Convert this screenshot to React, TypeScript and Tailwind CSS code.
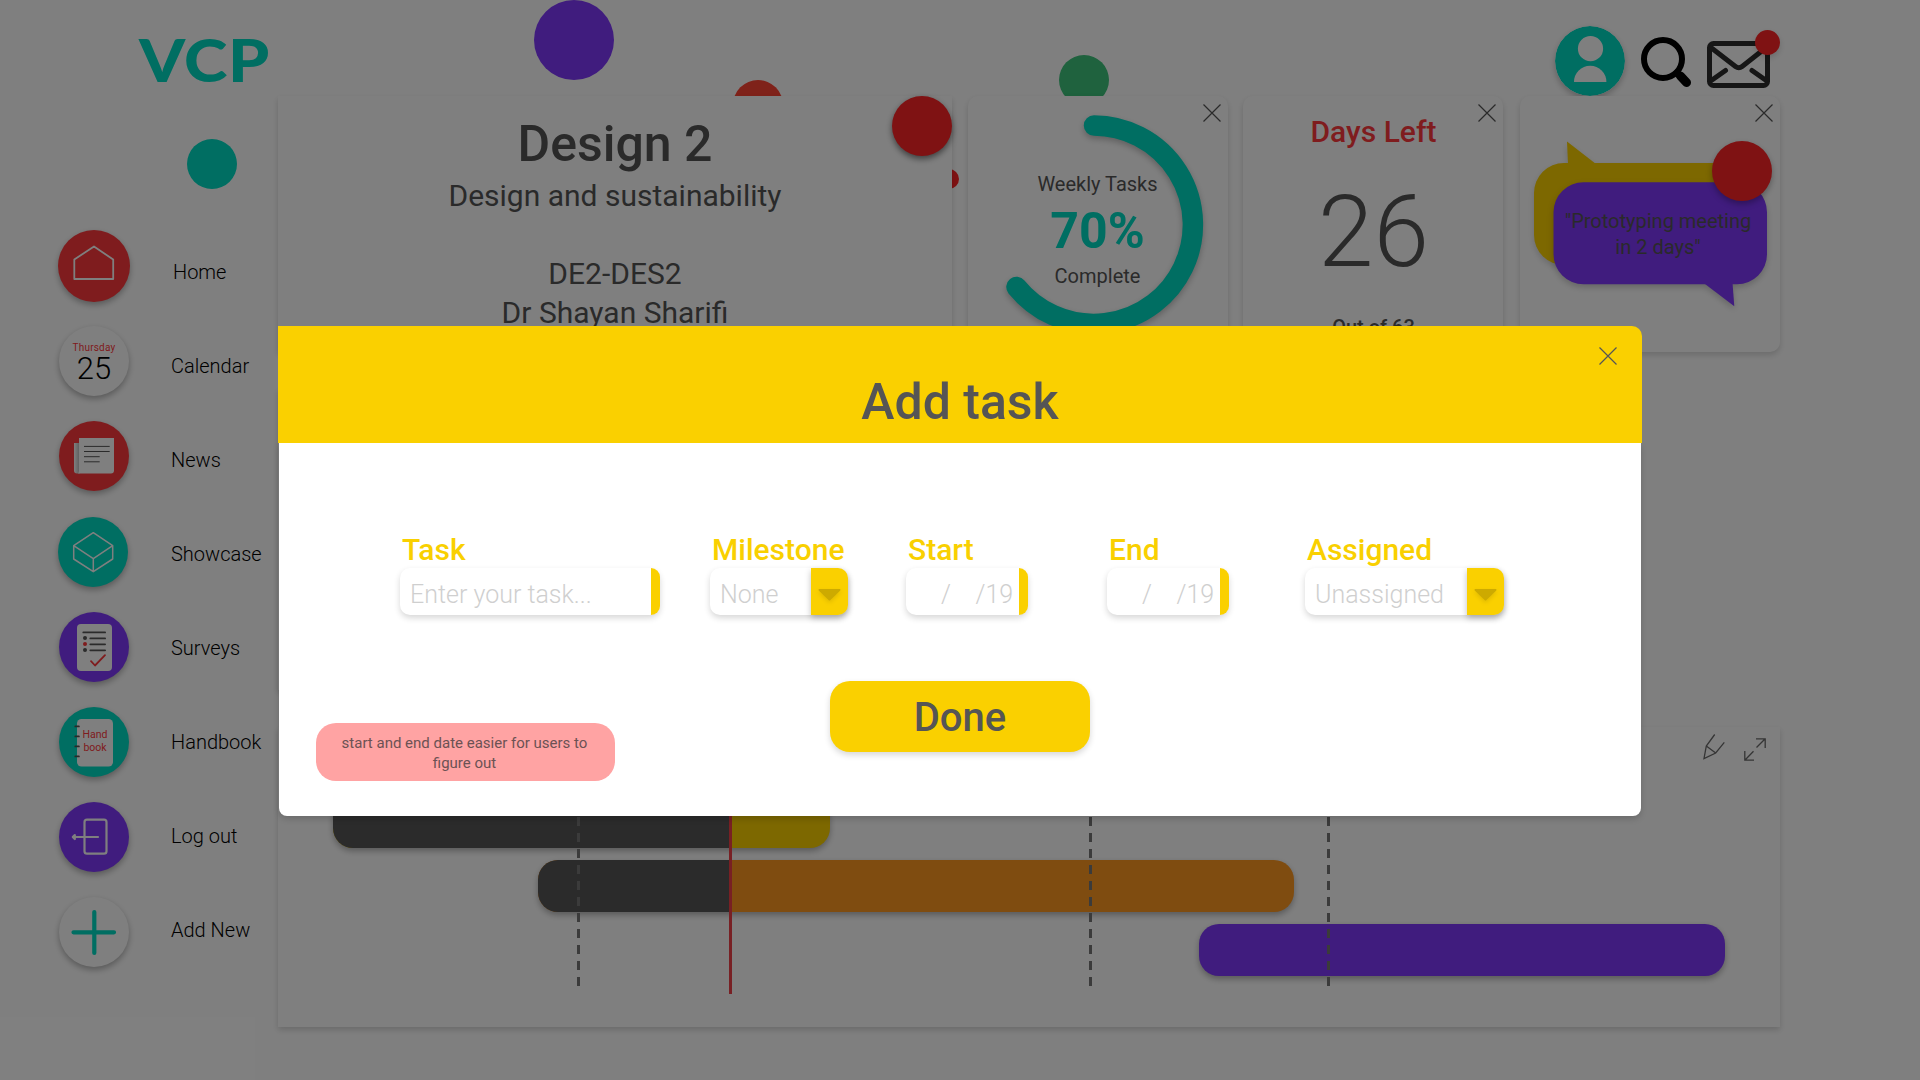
import React from "react";

const cardShadow = "shadow-[0_3px_6px_rgba(0,0,0,0.16)]";

function CloseIcon({ className = "" }: { className?: string }) {
  return (
    <svg className={className} width="18" height="18" viewBox="0 0 18 18" fill="none" stroke="#555555" strokeWidth="1.2">
      <path d="M.5 .5 17.5 17.5M17.5 .5.5 17.5" />
    </svg>
  );
}

function Dot({ className }: { className: string }) {
  return <div className={"absolute rounded-full " + className} />;
}

function Header() {
  return (
    <header className="relative flex h-24 items-start justify-between pl-[139px] pr-[140px]">
      <div className="origin-left scale-x-[1.115] pt-[25px] font-['Lato'] text-[59px] leading-[70px] font-black tracking-[0.5px] text-[#00dcc4]">
        VCP
      </div>
      <div className="flex gap-4">
        <svg className="mt-[26px] rounded-full shadow-[0_3px_6px_rgba(0,0,0,0.25)]" width="70" height="70" viewBox="0 0 70 70">
          <circle cx="35" cy="35" r="35" fill="#00dcc4" />
          <circle cx="35.5" cy="22.7" r="12.6" fill="#fff" />
          <path d="M19 56a16.2 16.2 0 0 1 32.4 0z" fill="#fff" />
        </svg>
        <svg className="mt-[37px]" width="50" height="50" viewBox="0 0 50 50" fill="none" stroke="#000" strokeLinecap="round">
          <circle cx="22" cy="22" r="19" strokeWidth="6" />
          <path d="M36 36l3 3" strokeWidth="7" />
          <path d="M39.500 39l6 6.500" strokeWidth="9" />
        </svg>
        <div className="relative mt-[30px] h-[58px] w-[73px]">
          <svg width="73" height="60" viewBox="0 0 73 60" fill="none" stroke="#2c2c2c" strokeWidth="5" strokeLinecap="round" strokeLinejoin="round">
            <rect x="2.500" y="13.500" width="58" height="42" rx="4" />
            <path d="M4.500 18 28.500 36.500q3.300 2.500 6.600 0L58.500 18" />
            <path d="M18.500 40.500 5 50M45 40.500 58.500 50" />
          </svg>
          <Dot className="top-0 right-0 size-[25px] bg-[#ff2426] shadow-[0_3px_6px_rgba(0,0,0,0.16)]" />
        </div>
      </div>
    </header>
  );
}

function NavCircle({ className, children }: { className: string; children: React.ReactNode }) {
  return (
    <div className={"relative shrink-0 rounded-full shadow-[0_3px_6px_rgba(0,0,0,0.3)] " + className}>{children}</div>
  );
}

function Sidebar() {
  const labels = ["Home", "Calendar", "News", "Showcase", "Surveys", "Handbook", "Log out", "Add New"];
  return (
    <nav className="flex w-[278px] shrink-0 pl-[58px]">
      <div className="flex w-[72px] flex-col items-center gap-[25px] pt-[134px]">
        <NavCircle className="-mb-px size-[72px] bg-[#ff383c]">
          <svg width="72" height="72" viewBox="0 0 72 72" fill="none" stroke="#fff" strokeWidth="1.8" strokeLinejoin="round">
            <path d="M36 16.500 55.200 29.500V49H16.300V29.500z" />
          </svg>
        </NavCircle>
        <NavCircle className="flex size-[70px] flex-col items-center bg-white pt-[15px]">
          <span className="text-[10px] leading-[14px] tracking-[0.200px] text-[#ff383c]">Thursday</span>
          <span className="-mt-px text-[31px] leading-[30px] font-light text-black">25</span>
        </NavCircle>
        <NavCircle className="size-[70px] bg-[#ff383c]">
          <svg width="70" height="70" viewBox="0 0 70 70">
            <defs>
              <linearGradient id="fold" x1="0" y1="0" x2="1" y2="0">
                <stop offset="0" stopColor="#fff" />
                <stop offset="1" stopColor="#b5b5b5" />
              </linearGradient>
            </defs>
            <path d="M15 22h6v30.400h-3a3 3 0 0 1-3-3z" fill="url(#fold)" />
            <path d="M20 17h35v32.400a3 3 0 0 1-3 3H19q1-1 1-3z" fill="#fff" />
            <path d="M25 25.400h25.700M25 30.500h25.700M25 35.700h15.700M25 40.800h15.700" stroke="#555" strokeWidth="1" />
          </svg>
        </NavCircle>
        <NavCircle className="mt-px mr-0.5 -mb-px size-[70px] bg-[#00dcc4]">
          <svg width="70" height="70" viewBox="0 0 70 70" fill="none" stroke="#fff" strokeWidth="1.500" strokeLinejoin="round">
            <path d="M35.300 15.700 54.700 28.700V42L35.300 54.700 15.700 42V28.700zM15.700 28.700 35.300 41.700 54.700 28.700M35.300 41.700v13" />
          </svg>
        </NavCircle>
        <NavCircle className="mt-px size-[70px] bg-[#8038fc]">
          <svg width="70" height="70" viewBox="0 0 70 70" fill="none" strokeLinecap="round" strokeLinejoin="round">
            <rect x="18" y="12" width="35" height="47" rx="4" fill="#fff" />
            <path d="M24.300 20.400h21.800M31.300 26.400h14.800M31.300 32.300h14.800M31.300 38.300h14.800" stroke="#565656" strokeWidth="1.800" />
            <circle cx="26" cy="26" r="2" fill="#565656" />
            <circle cx="26" cy="32" r="2" fill="#ff383c" />
            <circle cx="26" cy="38" r="2" fill="#565656" />
            <path d="M32 49.200 36 53.500 46 43.200" stroke="#ff383c" strokeWidth="1.800" />
          </svg>
        </NavCircle>
        <NavCircle className="size-[70px] bg-[#00dcc4]">
          <svg width="70" height="70" viewBox="0 0 70 70">
            <rect x="18" y="12" width="36" height="47.600" rx="4.500" fill="#fff" />
            <path d="M16.300 19.400h3.600M16.300 29.400h3.600M16.300 39.400h3.600M16.300 49.400h3.600" stroke="#555" strokeWidth="1.800" strokeLinecap="round" />
          </svg>
          <div className="absolute top-[22px] left-[18px] w-9 text-center text-[10.500px] leading-[12.800px] text-[#ff383c]">
            Hand
            <br />
            book
          </div>
        </NavCircle>
        <NavCircle className="size-[70px] bg-[#8038fc]">
          <svg width="70" height="70" viewBox="0 0 70 70" fill="none" stroke="#fff" strokeWidth="2.200" strokeLinecap="round" strokeLinejoin="round">
            <rect x="25.500" y="17.700" width="22" height="34" rx="2.500" />
            <path d="M39 35H14.500" />
            <path d="M15.800 33 13.800 35 15.800 37z" fill="#fff" />
          </svg>
        </NavCircle>
        <NavCircle className="size-[70px] bg-white">
          <svg width="70" height="70" viewBox="0 0 70 70" stroke="#00dcc4" strokeWidth="4.200" strokeLinecap="round">
            <path d="M14.500 35.300h40.500M35.300 15v41" />
          </svg>
        </NavCircle>
      </div>
      <ul className="ml-[41px] flex flex-col pt-[129px] text-[20px] leading-[94px] font-light whitespace-nowrap text-black">
        {labels.map((label, i) => (
          <li key={label} className={i === 0 ? "pl-0.5" : ""}>
            {label}
          </li>
        ))}
      </ul>
    </nav>
  );
}

function CourseCard() {
  return (
    <section className={"relative h-64 w-[674px] bg-white pt-[18px] text-center text-[30px] leading-[39px] text-[#555555] " + cardShadow}>
      <h1 className="mb-0.5 text-[50px] leading-[60px] font-medium">Design 2</h1>
      <p>Design and sustainability</p>
      <p className="mt-[39px]">DE2-DES2</p>
      <p>Dr Shayan Sharifi</p>
      <Dot className="top-0 right-0 size-[60px] bg-[#ff2426] shadow-[0_3px_6px_rgba(0,0,0,0.5)]" />
    </section>
  );
}

function SmallCard({ className = "", children }: { className?: string; children: React.ReactNode }) {
  return (
    <section className={"relative h-64 w-[260px] rounded-[10px] bg-white text-center text-[#555555] " + cardShadow + " " + className}>
      <CloseIcon className="absolute top-2 right-[7px]" />
      {children}
    </section>
  );
}

function WeeklyCard() {
  return (
    <SmallCard className="ml-4">
      <svg className="absolute inset-0 drop-shadow-[0_3px_3px_rgba(0,0,0,0.25)]" width="260" height="256" viewBox="0 0 260 256" fill="none">
        <path d="M126 29.500A99.200 99.200 0 1 1 48.500 191" stroke="#00dcc4" strokeWidth="20.500" strokeLinecap="round" />
      </svg>
      <div className="relative pt-[75px] pr-px">
        <p className="text-[20px] leading-[26px]">Weekly Tasks</p>
        <p className="mt-[5px] text-[50px] leading-[58px] font-bold text-[#00dcc4]">70%</p>
        <p className="mt-[3px] text-[20px] leading-[26px]">Complete</p>
      </div>
    </SmallCard>
  );
}

function DaysCard() {
  return (
    <SmallCard className="ml-[15px] pl-px">
      <p className="pt-[18px] text-[30px] leading-[36px] font-medium text-[#ff383c]">Days Left</p>
      <p className="mt-[26px] text-[100px] leading-[112px] font-light">26</p>
      <p className="mt-[26px] text-[20px] leading-[26px] font-medium">Out of 63</p>
    </SmallCard>
  );
}

function MessageCard() {
  return (
    <SmallCard className="ml-[17px]">
      <svg className="absolute inset-0 overflow-visible" width="260" height="256" viewBox="0 0 260 256">
        <g className="drop-shadow-[0_3px_3px_rgba(0,0,0,0.16)]">
          <path d="M44 67h153a30 30 0 0 1 30 30v42a30 30 0 0 1-30 30H44a30 30 0 0 1-30-30V97a30 30 0 0 1 30-30z" fill="#fad000" />
          <path d="M47 45.500 48 68h28z" fill="#fad000" />
        </g>
        <g className="drop-shadow-[0_3px_3px_rgba(0,0,0,0.2)]">
          <path d="M63.500 86.300H217a30 30 0 0 1 30 30v42a30 30 0 0 1-30 30H63.500a30 30 0 0 1-30-30v-42a30 30 0 0 1 30-30z" fill="#8038fc" />
          <path d="M185 188h27.600l1.700 22.200z" fill="#8038fc" />
        </g>
      </svg>
      <p className="relative ml-[33px] w-[210px] pt-[112px] text-[20px] leading-[26px] whitespace-nowrap">
        "Prototyping meeting
        <br />
        in 2 days"
      </p>
      <Dot className="top-[45px] right-2 size-[60px] bg-[#ff2426] shadow-[0_3px_6px_rgba(0,0,0,0.3)]" />
    </SmallCard>
  );
}

function MilestoneLine({ className }: { className: string }) {
  return (
    <div
      className={
        "absolute top-[26px] h-[233px] w-[3px] bg-[repeating-linear-gradient(to_bottom,#777777_0_9px,transparent_9px_16px)] " + className
      }
    />
  );
}

function Timeline() {
  const bar = "h-[52px] rounded-[20px] shadow-[0_3px_6px_rgba(0,0,0,0.3)] ";
  return (
    <section className={"relative mt-[37px] h-[300px] bg-white pt-[69px] " + cardShadow}>
      <div className="flex flex-col gap-3">
        <div className={bar + "ml-[55px] flex w-[497px] overflow-hidden bg-[#fad000]"}>
          <div className="w-[397px] bg-[#565656]" />
        </div>
        <div className={bar + "ml-[260px] flex w-[756px] overflow-hidden bg-[#ff9820]"}>
          <div className="w-[192px] bg-[#565656]" />
        </div>
        <div className={bar + "ml-[921px] w-[526px] bg-[#8038fc]"} />
      </div>
      <MilestoneLine className="left-[299px]" />
      <MilestoneLine className="left-[810.500px]" />
      <MilestoneLine className="left-[1049px]" />
      <div className="absolute top-[26px] left-[451px] h-[241px] w-[3px] bg-[#f04048]" />
      <div className="absolute top-[7px] right-[14px] flex gap-[19px]">
        <svg width="23" height="26" viewBox="0 0 23 26" fill="none" stroke="#6a6a6a" strokeWidth="1.300">
          <path d="M12.700 .5 4.300 12 2 24.700 13.700 19 22.300 8.300M4.300 12 13.700 19" />
        </svg>
        <svg className="mt-1" width="22" height="23" viewBox="0 0 22 23" fill="none" stroke="#6a6a6a" strokeWidth="1.300">
          <path d="M12 .8h9.200V10M21.200 .8 12.500 9.500M.8 13v9.200H10M.8 22.200 9.500 13.300" />
        </svg>
      </div>
    </section>
  );
}

function Field({
  label,
  className,
  dropdown = false,
  children,
}: {
  label: string;
  className: string;
  dropdown?: boolean;
  children: React.ReactNode;
}) {
  return (
    <div className={className}>
      <div className="pl-0.5 text-[30px] leading-[36px] font-medium whitespace-nowrap text-[#f9d000]">{label}</div>
      <div className="flex h-[47px] rounded-[10px] bg-white shadow-[0_3px_6px_rgba(0,0,0,0.16)]">
        <div className="flex-1 text-[25px] leading-[53px] font-light whitespace-pre text-[#cfcfcf]">{children}</div>
        {dropdown ? (
          <div className="flex w-[37px] items-center justify-center rounded-r-[10px] bg-[#fad000] pt-[6px] shadow-[0_3px_6px_rgba(0,0,0,0.25)]">
            <svg className="drop-shadow-[0_2px_2px_rgba(0,0,0,0.1)]" width="23" height="12" viewBox="0 0 23 12">
              <path d="M1 0h21q1 .6.300 1.400L12.500 11q-1 1-2 0L.7 1.400Q0 .600 1 0z" fill="#cdaa00" />
            </svg>
          </div>
        ) : (
          <div className="w-[9px] rounded-r-[10px] bg-[#fad000]" />
        )}
      </div>
    </div>
  );
}

function DateMask() {
  return (
    <div className="flex pl-[35px]">
      <span className="w-[34.500px]">/</span>
      <span>/19</span>
    </div>
  );
}

function AddTaskDialog() {
  return (
    <div className="w-[1364px] text-[#555555]">
      <div className="relative h-[117px] rounded-tr-[10px] bg-[#fad000] pt-[46px] text-center text-[50px] leading-[60px] font-medium">
        Add task
        <CloseIcon className="absolute top-[21px] right-[25px]" />
      </div>
      <div className="mx-px flex h-[373px] flex-col rounded-b-[8px] bg-white pt-[89px] shadow-[0_3px_6px_rgba(0,0,0,0.16)]">
        <div className="flex pl-[121px]">
          <Field label="Task" className="w-[260px]">
            <span className="pl-2.5">Enter your task...</span>
          </Field>
          <Field label="Milestone" className="ml-[50px] w-[138px]" dropdown>
            <span className="pl-2.5">None</span>
          </Field>
          <Field label="Start" className="ml-[58px] w-[122px]">
            <DateMask />
          </Field>
          <Field label="End" className="ml-[79px] w-[122px]">
            <DateMask />
          </Field>
          <Field label="Assigned" className="ml-[76px] w-[199px]" dropdown>
            <span className="pl-2.5">Unassigned</span>
          </Field>
        </div>
        <div className="flex pt-[66px] pl-[37px]">
          <p className="mt-[42px] h-[58px] w-[299px] rounded-[20px] bg-[#ffa3a3] pt-[10px] pr-[21px] pl-[19px] text-center text-[15px] leading-[20px] text-[#6c5254]">
            start and end date easier for users to figure out
          </p>
          <button className="ml-[215px] h-[71px] w-[260px] rounded-[20px] bg-[#fad000] pt-0.5 text-[40px] leading-[69px] font-medium shadow-[0_3px_6px_rgba(0,0,0,0.16)]">
            Done
          </button>
        </div>
      </div>
    </div>
  );
}

export default function App() {
  return (
    <div className="relative h-[1080px] w-[1920px] overflow-hidden bg-white font-['Roboto',sans-serif]">
      <Dot className="top-0 left-[534px] size-20 bg-[#8038fc]" />
      <Dot className="top-[139px] left-[187px] size-[50px] bg-[#00dcc4]" />
      <Dot className="top-20 left-[733px] size-[50px] bg-[#ff4434]" />
      <Dot className="top-[55px] left-[1059px] size-[50px] bg-[#3ec47c]" />
      <Dot className="top-[169px] left-[939px] size-5 bg-[#ff2426]" />
      <Header />
      <div className="relative flex">
        <Sidebar />
        <main className="w-[1502px]">
          <div className="flex">
            <CourseCard />
            <WeeklyCard />
            <DaysCard />
            <MessageCard />
          </div>
          <div className={"mt-9 h-[302px] w-[1352px] bg-white " + cardShadow} />
          <Timeline />
        </main>
      </div>
      <div className="absolute inset-0 bg-black/50 pt-[326px] pl-[278px]">
        <AddTaskDialog />
      </div>
    </div>
  );
}
